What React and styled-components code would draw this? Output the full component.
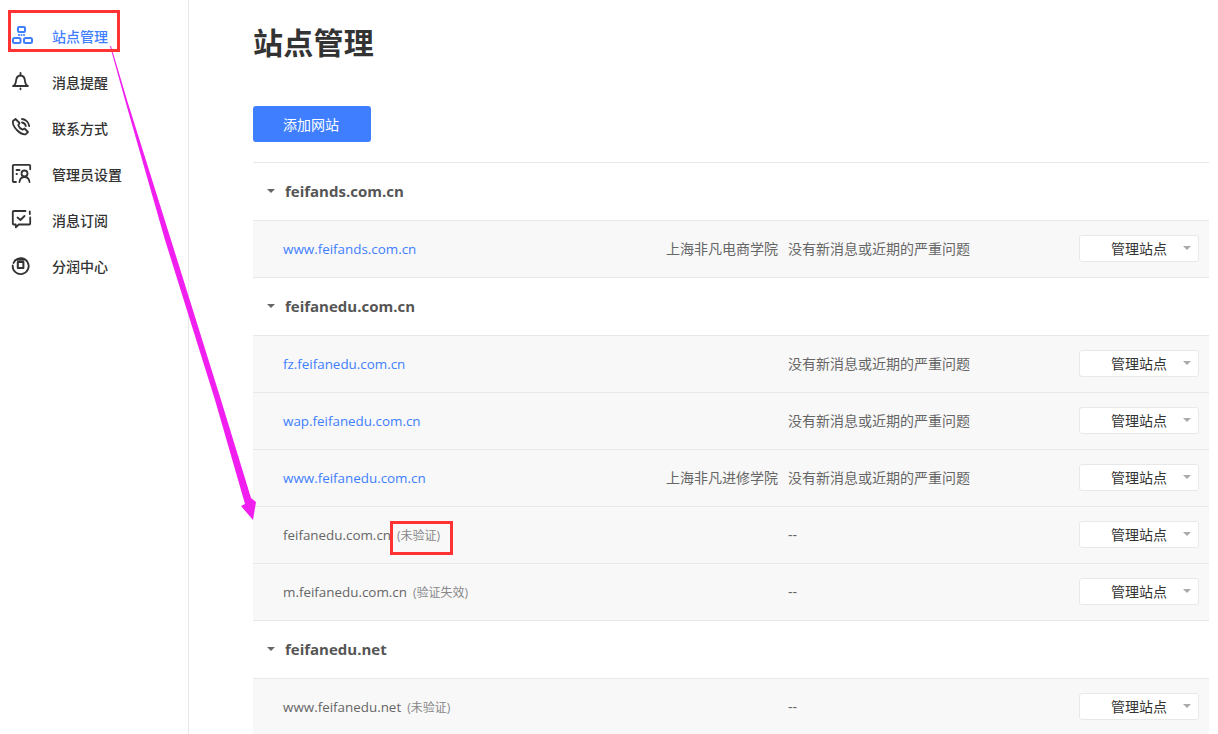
import React from 'react';
import styled, { createGlobalStyle } from 'styled-components';

const GlobalStyle = createGlobalStyle`
  html, body {
    margin: 0;
    padding: 0;
    background: #fff;
    overflow: hidden;
  }
  body {
    font-family: "Open Sans", "Noto Sans CJK SC", sans-serif;
    color: #333;
  }
`;

const Page = styled.div`
  position: relative;
  display: flex;
  width: 1218px;
  height: 734px;
  overflow: hidden;
`;

const Sidebar = styled.nav`
  flex: none;
  width: 188px;
  padding-top: 13px;
  box-sizing: content-box;
  height: 721px;
  border-right: 1px solid #e8e8e8;
`;

const NavItem = styled.div`
  display: flex;
  align-items: center;
  height: 46px;
  padding-left: 11px;
  font-size: 14px;
  font-weight: 500;
  color: ${(p) => (p.$active ? '#3f7fff' : '#333')};

  svg {
    flex: none;
    width: 22px;
    height: 22px;
    margin: -2px 19px 0 0;
  }
`;

const Main = styled.main`
  flex: none;
  width: 956px;
  margin-left: 64px;
`;

const Title = styled.h1`
  margin: 0;
  height: 106px;
  padding-top: 23px;
  box-sizing: border-box;
  font-size: 30px;
  line-height: 40px;
  font-weight: 700;
  letter-spacing: 0.25px;
  color: #333;
`;

const AddButton = styled.button`
  display: block;
  width: 118px;
  height: 36px;
  padding: 0 2px 0 0;
  border: 0;
  border-radius: 3px;
  background: #3f7fff;
  color: #fff;
  font-family: inherit;
  font-size: 14px;
`;

const List = styled.div`
  margin-top: 20px;
  border-top: 1px solid #e8e8e8;
`;

const GroupHeader = styled.div`
  display: flex;
  align-items: center;
  box-sizing: border-box;
  height: 58px;
  padding: 0 0 2px 14px;
  border-bottom: 1px solid #e8e8e8;
  font-size: 15px;
  font-weight: 700;
  color: #555;
`;

const Caret = styled.span`
  width: 0;
  height: 0;
  margin-right: 10px;
  border-style: solid;
  border-width: 4px 4px 0 4px;
  border-color: ${(p) => p.$color || '#666'} transparent transparent transparent;
`;

const Row = styled.div`
  display: grid;
  grid-template-columns: 372px 133px 291px 120px;
  align-items: center;
  box-sizing: border-box;
  height: 57px;
  padding: 0 10px 2px 30px;
  background: #f8f8f8;
  border-bottom: 1px solid #e8e8e8;
`;

const SiteName = styled.div`
  padding-top: 2px;
  font-size: 13.4px;
  color: ${(p) => (p.$link ? '#3f7fff' : '#666')};
  white-space: nowrap;
`;

const Tag = styled.span`
  margin-left: 6px;
  font-size: 12px;
  color: #888;
`;

const Org = styled.div`
  padding-right: 10px;
  text-align: right;
  font-size: 14px;
  color: #666;
  white-space: nowrap;
`;

const Status = styled.div`
  font-size: 14px;
  color: #666;
  white-space: nowrap;
`;

const ManageSelect = styled.div`
  display: flex;
  align-items: center;
  justify-content: flex-end;
  box-sizing: border-box;
  height: 27px;
  background: #fff;
  border: 1px solid #e8e8e8;
  border-radius: 3px;
  font-size: 14px;
  color: #333;

  span:first-child {
    margin-right: 16px;
  }
  span:last-child {
    margin-right: 7px;
  }
`;

const Highlight = styled.div`
  position: absolute;
  left: ${(p) => p.$x}px;
  top: ${(p) => p.$y}px;
  width: ${(p) => p.$w}px;
  height: ${(p) => p.$h}px;
  box-sizing: border-box;
  border: 3px solid #ff3333;
  pointer-events: none;
`;

const ArrowLayer = styled.svg`
  position: absolute;
  left: 0;
  top: 0;
  pointer-events: none;
`;

const stroke = {
  fill: 'none',
  stroke: 'currentColor',
  strokeWidth: 1.8,
  strokeLinecap: 'round',
  strokeLinejoin: 'round',
};

const SitesIcon = () => (
  <svg viewBox="0 0 22 22" {...stroke} strokeWidth="2">
    <rect x="7" y="3" width="7" height="5" rx="1" />
    <rect x="2" y="14" width="7.500" height="5" rx="1.500" />
    <rect x="13" y="14" width="8" height="5" rx="1.500" />
    <path d="M8 11h.1M10.500 11h.1M13 11h.1" />
  </svg>
);

const BellIcon = () => (
  <svg viewBox="0 0 22 22" {...stroke}>
    <path d="M2 16c2.200-.8 2.800-2.400 3-5 .3-3.400 1.800-5.500 4.500-5.500s4.200 2.100 4.500 5.500c.2 2.600.8 4.200 3 5z" />
    <path d="M9.500 3v2.500M9.500 18.500v.8" />
  </svg>
);

const PhoneIcon = () => (
  <svg viewBox="0 0 22 22" {...stroke}>
    <path d="M4.500 3 2 5c-.6 2.500 1 6 3.800 9 3 3 6.200 4.800 8.800 4.300l2.400-2.300-3.500-3.500-2 1.200c-1.500-.6-3.600-2.800-4.200-4.500l1.200-2.200z" />
    <path d="M11 3c3.800.4 6.800 3.300 7.200 7.200M11 6.500c2 .3 3.500 1.700 3.800 3.700" />
  </svg>
);

const AdminIcon = () => (
  <svg viewBox="0 0 22 22" {...stroke}>
    <path d="M5 20H2.800a1 1 0 0 1-1-1V3.800a1 1 0 0 1 1-1h15.400a1 1 0 0 1 1 1v3.500" />
    <path d="M5.500 8h3M5.500 12h.5" />
    <circle cx="13.500" cy="11.500" r="3" />
    <path d="M8.500 20c.4-3 2.400-5 5-5s4.600 2 5 5" />
  </svg>
);

const SubscribeIcon = () => (
  <svg viewBox="0 0 22 22" {...stroke}>
    <path d="M14.500 3H2.800a1 1 0 0 0-1 1v11.500a1 1 0 0 0 1 1h2v2.800l3-2.800h10.400a1 1 0 0 0 1-1V9.500" />
    <path d="M6.500 9.500l3 2.500 4-4M18.800 3.500v2.500" />
  </svg>
);

const ShareIcon = () => (
  <svg viewBox="0 0 22 22" {...stroke}>
    <path d="M4 6.500A8 8 0 1 1 1.700 11.500" />
    <path d="M2.500 9l1.500-2.500" />
    <rect x="6.800" y="8" width="5.600" height="6" strokeWidth="2" />
    <path d="M6 5.800h7" />
  </svg>
);

const navItems = [
  { label: '站点管理', icon: SitesIcon, active: true },
  { label: '消息提醒', icon: BellIcon },
  { label: '联系方式', icon: PhoneIcon },
  { label: '管理员设置', icon: AdminIcon },
  { label: '消息订阅', icon: SubscribeIcon },
  { label: '分润中心', icon: ShareIcon },
];

const OK = '没有新消息或近期的严重问题';

const groups = [
  {
    name: 'feifands.com.cn',
    sites: [{ name: 'www.feifands.com.cn', link: true, org: '上海非凡电商学院', status: OK }],
  },
  {
    name: 'feifanedu.com.cn',
    sites: [
      { name: 'fz.feifanedu.com.cn', link: true, status: OK },
      { name: 'wap.feifanedu.com.cn', link: true, status: OK },
      { name: 'www.feifanedu.com.cn', link: true, org: '上海非凡进修学院', status: OK },
      { name: 'feifanedu.com.cn', tag: '(未验证)', status: '--' },
      { name: 'm.feifanedu.com.cn', tag: '(验证失效)', status: '--' },
    ],
  },
  {
    name: 'feifanedu.net',
    sites: [{ name: 'www.feifanedu.net', tag: '(未验证)', status: '--' }],
  },
];

export default function App() {
  return (
    <Page>
      <GlobalStyle />
      <Sidebar>
        {navItems.map(({ label, icon: Icon, active }) => (
          <NavItem key={label} $active={active}>
            <Icon />
            {label}
          </NavItem>
        ))}
      </Sidebar>
      <Main>
        <Title>站点管理</Title>
        <AddButton>添加网站</AddButton>
        <List>
          {groups.map((group) => (
            <React.Fragment key={group.name}>
              <GroupHeader>
                <Caret />
                {group.name}
              </GroupHeader>
              {group.sites.map((site) => (
                <Row key={site.name}>
                  <SiteName $link={site.link}>
                    {site.name}
                    {site.tag && <Tag>{site.tag}</Tag>}
                  </SiteName>
                  <Org>{site.org}</Org>
                  <Status>{site.status}</Status>
                  <ManageSelect>
                    <span>管理站点</span>
                    <Caret $color="#aaa" />
                  </ManageSelect>
                </Row>
              ))}
            </React.Fragment>
          ))}
        </List>
      </Main>
      <ArrowLayer width="1218" height="734" viewBox="0 0 1218 734">
        <polygon
          fill="#f01ff0"
          points="110,46 111,46 127,100 171,240 221,400 251,498 256,502 253,520 241,506 245,504 215,400 165,240 125,100"
        />
      </ArrowLayer>
      <Highlight $x={8} $y={10} $w={112} $h={42} />
      <Highlight $x={390} $y={521} $w={63} $h={34} />
    </Page>
  );
}
